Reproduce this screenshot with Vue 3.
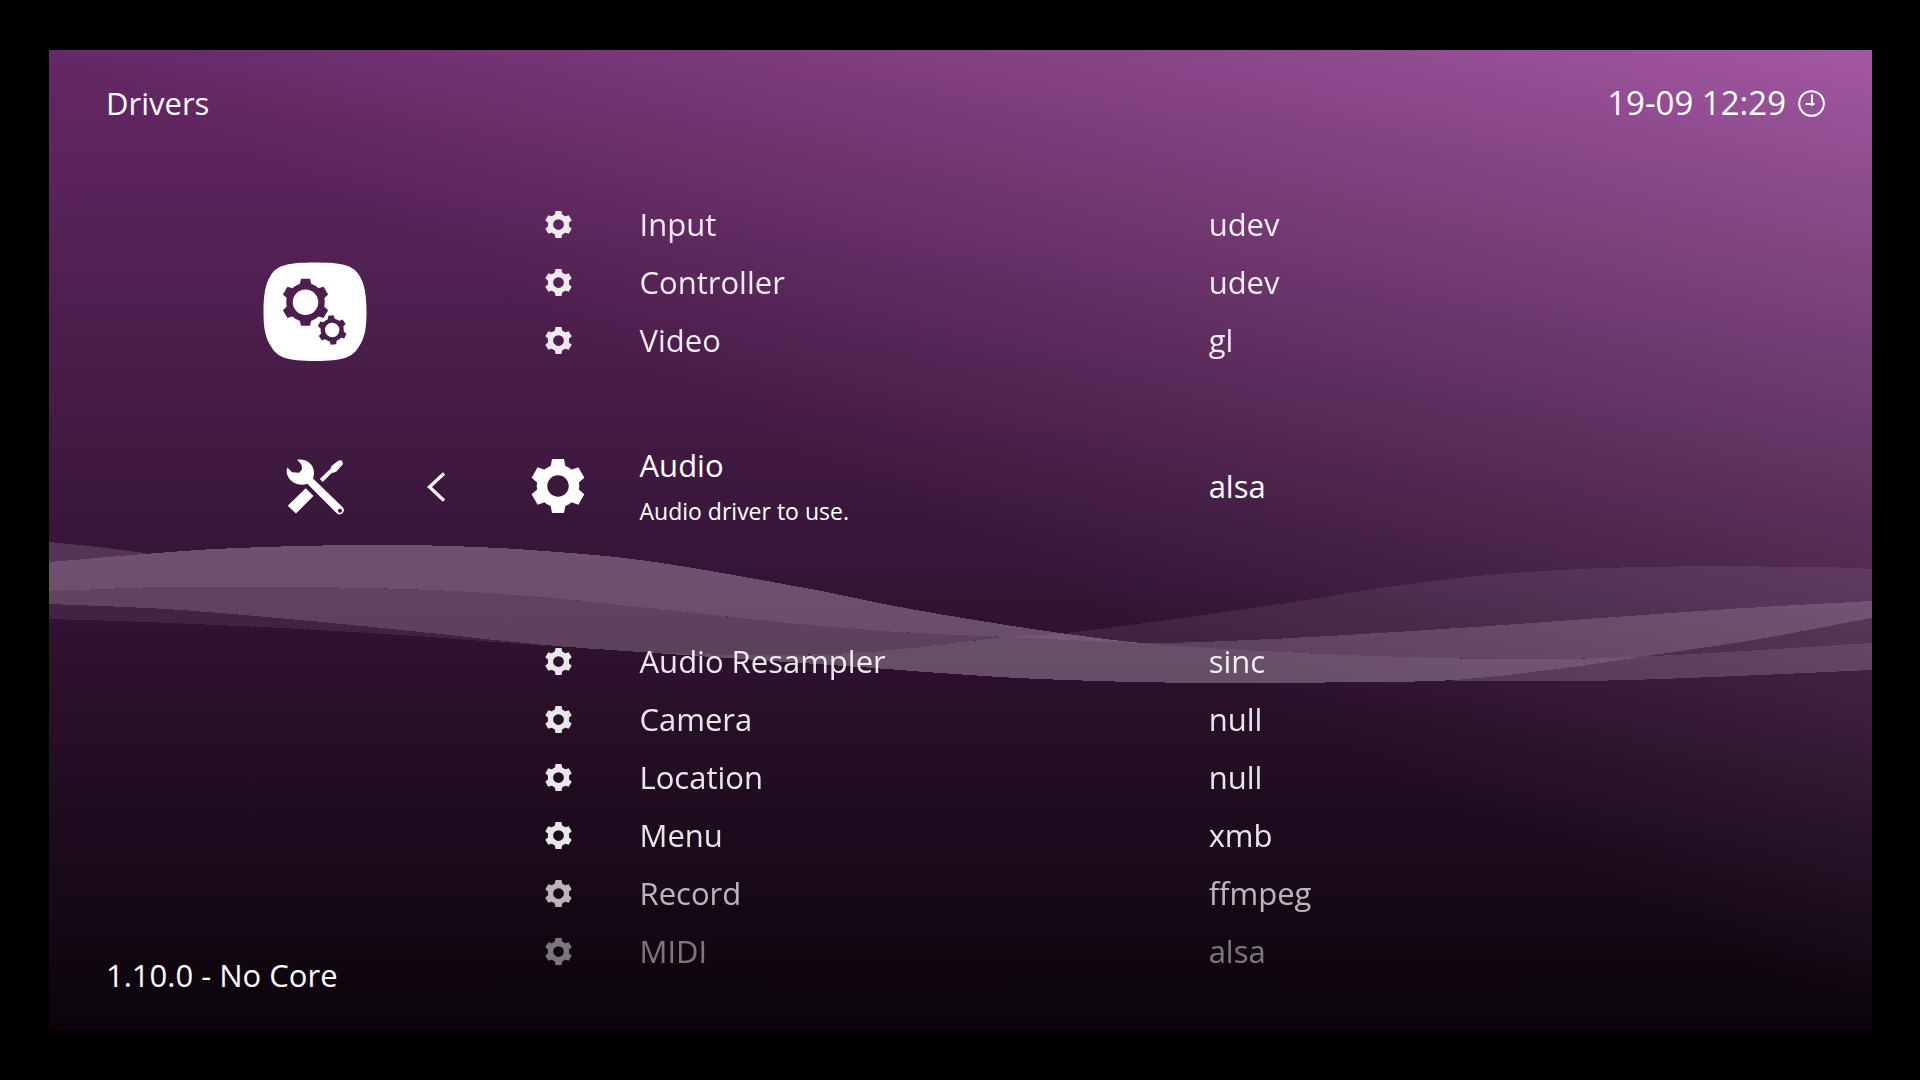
<script setup>
const rows = [
  { label: 'Input', value: 'udev', opacity: 0.9 },
  { label: 'Controller', value: 'udev', opacity: 0.9 },
  { label: 'Video', value: 'gl', opacity: 0.9 },
  { label: 'Audio', value: 'alsa', opacity: 1, help: 'Audio driver to use.' },
  { label: 'Audio Resampler', value: 'sinc', opacity: 0.9 },
  { label: 'Camera', value: 'null', opacity: 0.9 },
  { label: 'Location', value: 'null', opacity: 0.9 },
  { label: 'Menu', value: 'xmb', opacity: 0.9 },
  { label: 'Record', value: 'ffmpeg', opacity: 0.7 },
  { label: 'MIDI', value: 'alsa', opacity: 0.45 },
]

const teeth = [0, 60, 120, 180, 240, 300]

// Smooth curve through the given points, as a function of x.
function curve(points) {
  const slope = (i) => {
    const a = points[Math.max(i - 1, 0)]
    const b = points[Math.min(i + 1, points.length - 1)]
    return (b[1] - a[1]) / (b[0] - a[0])
  }
  return (x) => {
    let i = points.findIndex((p, n) => n > 0 && x <= p[0]) - 1
    if (i < 0) i = x < points[0][0] ? 0 : points.length - 2
    const [x0, y0] = points[i]
    const [x1, y1] = points[i + 1]
    const w = x1 - x0
    const t = (x - x0) / w
    const t2 = t * t
    const t3 = t2 * t
    return (2 * t3 - 3 * t2 + 1) * y0 + (t3 - 2 * t2 + t) * w * slope(i) +
      (3 * t2 - 2 * t3) * y1 + (t3 - t2) * w * slope(i + 1)
  }
}

const a = curve([[49, 542], [97, 547], [145, 553]])
const b = curve([[49, 562], [145, 554], [216, 549], [300, 546], [380, 545], [450, 546], [530, 550], [640, 560], [800, 587], [900, 607], [1000, 624], [1075, 635], [1142, 643], [1280, 652], [1440, 658], [1550, 659], [1655, 656], [1872, 643]])
const c = curve([[49, 591], [165, 587], [310, 587], [430, 590], [530, 596], [640, 607], [800, 624], [900, 632], [1008, 637], [1142, 643], [1200, 642], [1310, 637], [1474, 627], [1615, 617], [1745, 608], [1872, 601]])
const d = curve([[49, 619], [145, 622], [300, 629], [430, 637], [545, 646], [640, 652], [750, 655], [868, 652], [1008, 637], [1075, 632], [1280, 604], [1380, 588], [1500, 574], [1640, 567], [1820, 567], [1872, 569]])
const f = curve([[49, 604], [165, 609], [300, 620], [430, 633], [545, 645], [640, 652], [860, 667], [940, 673], [1040, 679], [1200, 683], [1370, 682], [1453, 680], [1550, 670], [1640, 657], [1753, 640], [1872, 618]])
const h = curve([[1453, 681], [1580, 681], [1660, 679], [1760, 675], [1872, 670]])

function band(from, to, top, bottom, alpha) {
  const upper = []
  const lower = []
  const steps = Math.ceil((to - from) / 10)
  for (let i = 0; i <= steps; i++) {
    const x = from + ((to - from) * i) / steps
    upper.push(`${x.toFixed(1)},${top(x).toFixed(1)}`)
    lower.unshift(`${x.toFixed(1)},${Math.max(top(x), bottom(x)).toFixed(1)}`)
  }
  return { points: [...upper, ...lower].join(' '), alpha }
}

const min = (p, q) => (x) => Math.min(p(x), q(x))
const max = (p, q) => (x) => Math.max(p(x), q(x))

const ribbon = [
  band(49, 145, a, b, 0.15),
  band(49, 1142, b, c, 0.28),
  band(1008, 1142, max(b, d), c, 0.07),
  band(1068, 1872, d, min(b, c), 0.08),
  band(49, 1008, c, min(f, d), 0.22),
  band(49, 545, f, d, 0.08),
  band(545, 1645, max(max(b, c), d), f, 0.28),
  band(1142, 1872, c, min(b, f), 0.22),
  band(1640, 1872, f, b, 0.08),
  band(1453, 1872, max(b, f), h, 0.17),
]
</script>

<template>
  <div class="screen">
    <svg width="0" height="0" class="defs" aria-hidden="true">
      <symbol id="gear" viewBox="-27 -27 54 54">
        <circle r="16" fill="none" stroke="currentColor" stroke-width="10.5" />
        <path v-for="t in teeth" :key="t" d="M-6 -27H6L7.5 -19H-7.5Z" fill="currentColor" :transform="`rotate(${t})`" />
      </symbol>
    </svg>

    <div class="backdrop" aria-hidden="true">
      <svg class="ribbon" viewBox="49 50 1823 980" preserveAspectRatio="none" shape-rendering="crispEdges">
        <polygon v-for="(r, i) in ribbon" :key="i" :points="r.points" fill="#ffeeff" :fill-opacity="r.alpha" />
      </svg>
    </div>

    <header class="top">
      <h1 class="title">Drivers</h1>
      <div class="clock">
        <time>19-09 12:29</time>
        <svg width="27" height="27" viewBox="0 0 27 27" fill="none" stroke="#fff" stroke-width="2" aria-hidden="true">
          <circle cx="13.5" cy="13.5" r="12.3" />
          <path d="M14 4.5V16M7.5 14H16.500" />
        </svg>
      </div>
    </header>

    <main class="content">
      <div class="side">
        <nav class="nav">
          <button class="icon-button" type="button" aria-label="Settings">
            <svg width="104" height="100" viewBox="0 0 104 100">
              <mask id="cut">
                <rect width="104" height="100" fill="#fff" />
                <g transform="translate(42.5 40.3)">
                  <circle r="16" fill="none" stroke="#000" stroke-width="6.5" />
                  <path v-for="t in teeth" :key="t" d="M-4.5 -23.5H4.5L6 -17H-6Z" :transform="`rotate(${t})`" />
                </g>
                <g transform="translate(69.2 68) rotate(-5)">
                  <circle r="9.4" fill="none" stroke="#000" stroke-width="4.4" />
                  <path v-for="t in teeth" :key="t" d="M-2.7 -14.5H2.7L3.7 -10H-3.7Z" :transform="`rotate(${t})`" />
                </g>
              </mask>
              <path mask="url(#cut)" fill="#fff" d="M52 .5C80 .5 90 3.500 96 13C102 22 103.500 34 103.500 50C103.500 66 102 76 95 86C89 95 81 99 52 99C23 99 15 95 9 86C2 76 .5 66 .5 50C.5 34 2 22 8 13C14 3.500 24 .5 52 .5Z" />
            </svg>
          </button>
          <button class="icon-button" type="button" aria-label="Drivers">
            <svg width="60" height="60" viewBox="0 0 60 60" fill="#fff">
              <path d="M2.700 48.700L20.700 31.300L28.500 39L11 56.500Z" />
              <path d="M36.300 23.500L46 13.800" stroke="#fff" stroke-width="4" />
              <path d="M45 13L46.500 9L53.500 3.500L57 3.500L58 7L51.500 14.500L47.500 16Z" />
              <path fill-rule="evenodd" d="M12 2.800C20 .8 29 6.500 29 15.500C29 18 28.500 19.500 28 21.500L58 50.500C60.500 54 57 59 52.500 57L22.300 26.800C13 30 3 24.500 1.700 15.500C1.500 13.500 1.800 12 2.500 10.500L7 15.300L14 15.800L17 12.500L16.500 7.500ZM55 51.800A2 2 0 1 0 55 55.800A2 2 0 1 0 55 51.800Z" />
            </svg>
          </button>
          <button class="icon-button" type="button" aria-label="Back">
            <svg width="18" height="30" viewBox="0 0 18 30" fill="none" stroke="#fff" stroke-width="3.300">
              <path d="M17 1.500L2.500 15L17 28.500" />
            </svg>
          </button>
        </nav>
        <footer class="version">1.10.0 - No Core</footer>
      </div>

      <ul class="list">
        <li v-for="row in rows" :key="row.label">
          <button type="button" class="row" :class="{ active: row.help }" :style="{ opacity: row.opacity }">
            <svg class="gear" aria-hidden="true"><use href="#gear" /></svg>
            <span class="label">
              <span>{{ row.label }}</span>
              <small v-if="row.help" class="help">{{ row.help }}</small>
            </span>
            <span>{{ row.value }}</span>
          </button>
        </li>
      </ul>
    </main>
  </div>
</template>

<style>
body {
  background: #000;
}
</style>

<style scoped>
.screen {
  position: relative;
  box-sizing: border-box;
  display: flex;
  flex-direction: column;
  min-height: calc(100vh - 100px);
  margin: 50px 48px 50px 49px;
  color: #fff;
  font-family: "Open Sans", "Noto Sans", sans-serif;
  font-size: 31px;
  font-variant-ligatures: none;
  line-height: 44px;
}

.defs {
  position: absolute;
}

.backdrop {
  position: absolute;
  inset: 0;
  isolation: isolate;
  background: linear-gradient(#662866, #0a040a);
}

.backdrop::before {
  content: "";
  position: absolute;
  inset: 0;
  background: linear-gradient(to top right, #000 50%, #3c303c);
  mix-blend-mode: plus-lighter;
}

.ribbon {
  position: absolute;
  width: 100%;
  height: 100%;
}

.top {
  position: relative;
  display: flex;
  justify-content: space-between;
  padding: 31px 47px 70px 57px;
}

.title {
  margin: 0;
  font: inherit;
}

.clock {
  display: flex;
  align-items: center;
  gap: 12px;
  font-size: 33px;
}

.content {
  position: relative;
  display: grid;
  grid-template-columns: 24% 1fr;
  flex: 1;
}

.side {
  display: flex;
  flex-direction: column;
  justify-content: space-between;
  padding: 67px 0 33px;
}

.nav {
  display: grid;
  grid-template-columns: 104px 18px;
  gap: 95px 60px;
  justify-content: end;
  justify-items: center;
  align-items: center;
  padding-right: 42px;
}

.nav > :first-child {
  grid-column: 1;
}

.nav > :nth-child(2),
.nav > :nth-child(3) {
  grid-row: 2;
}

.icon-button {
  display: block;
  padding: 0;
  border: 0;
  background: none;
}

.icon-button svg {
  display: block;
}

.version {
  padding-left: 57px;
}

.list {
  margin: 0;
  padding: 0;
  list-style: none;
}

.row {
  display: grid;
  grid-template-columns: 143px 558fr 662fr;
  column-gap: 10px;
  align-items: center;
  width: 100%;
  height: 58px;
  padding: 0;
  border: 0;
  background: none;
  color: inherit;
  font: inherit;
  font-variant-ligatures: none;
  text-align: left;
}

.row.active {
  height: 234px;
  margin-bottom: 29px;
}

.gear {
  justify-self: center;
  width: 27px;
  height: 27px;
}

.active .gear {
  width: 54px;
  height: 54px;
}

.label {
  display: flex;
  flex-direction: column;
  gap: 6px;
}

.help {
  font-size: 23px;
  line-height: 36px;
}
</style>
